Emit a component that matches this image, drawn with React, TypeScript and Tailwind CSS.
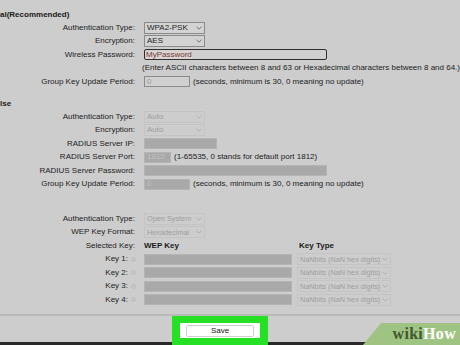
const Chevron = ({ color = "#555" }: { color?: string }) => (
  <svg width="6" height="4" viewBox="0 0 6 4" className="shrink-0">
    <path d="M0.5 0.8 L3 3.2 L5.5 0.8" fill="none" stroke={color} strokeWidth="0.8" />
  </svg>
);

const Select = ({ value, width, disabled, small }: { value: string; width: string; disabled?: boolean; small?: boolean }) => (
  <div
    className={[
      "flex h-[12px] items-center justify-between gap-[1px] whitespace-nowrap border pl-[2px] pr-[2px]",
      width,
      small ? "text-[7.3px]" : "",
      disabled ? "border-[#c4c4c4] text-[#9e9e9e]" : "border-[#8a8a8a] bg-[#d3d3d3] text-[#1e1e1e]",
    ].join(" ")}
  >
    <span className="leading-none">{value}</span>
    <Chevron color={disabled ? "#aaa" : "#555"} />
  </div>
);

const Field = ({ width, value, disabled }: { width: string; value?: string; disabled?: boolean }) => (
  <div
    className={[
      "flex h-[11px] items-center border px-[2px] leading-none",
      width,
      disabled ? "border-[#b4b4b4] bg-[#a9a9a9] text-[#c2c2c2]" : "border-[#8a8a8a] bg-[#d0d0d0] text-[#9a9a9a]",
    ].join(" ")}
  >
    {value}
  </div>
);

const Row = ({ label, children, radio }: { label: string; children?: React.ReactNode; radio?: boolean }) => (
  <div className="flex h-[13.5px] items-center">
    <div className="flex w-[136px] items-center justify-end pr-[1px] text-[#222]">
      <span>{label}</span>
      {radio && <span className="ml-[3px] mr-[-1px] h-[5px] w-[5px] rounded-full border border-[#bdbdbd] bg-[#c8c8c8]" />}
    </div>
    <div className="ml-[8px] flex items-center gap-[3px]">{children}</div>
  </div>
);

const Note = ({ children }: { children: React.ReactNode }) => (
  <span className="whitespace-nowrap text-[#222]">{children}</span>
);

export default function App() {
  return (
    <div className="relative h-[345px] w-[460px] overflow-hidden bg-[#cdcdcd] font-['Liberation_Sans',Arial,sans-serif] text-[8px]">
      <div className="flex flex-col pt-[9px]">
        <div className="flex h-[12px] items-center font-bold text-[#1a1a1a]">al(Recommended)</div>
        <Row label="Authentication Type:">
          <Select value="WPA2-PSK" width="w-[61px]" />
        </Row>
        <Row label="Encryption:">
          <Select value="AES" width="w-[61px]" />
        </Row>
        <Row label="Wireless Password:">
          <div className="flex h-[11px] w-[183px] items-center rounded-[2px] border border-[#2e2e2e] bg-[#d0d0d0] px-[1px] leading-none">
            <span className="bg-[#ddd3d3] text-[#6e3a3a]">MyPassword</span>
          </div>
        </Row>
        <Row label="">
          <span className="pl-[4px]">
            <Note>(Enter ASCII characters between 8 and 63 or Hexadecimal characters between 8 and 64.)</Note>
          </span>
        </Row>
        <Row label="Group Key Update Period:">
          <Field width="w-[46px]" value="0" />
          <Note>(seconds, minimum is 30, 0 meaning no update)</Note>
        </Row>

        <div className="mt-[9.5px] flex h-[12px] items-center font-bold text-[#1a1a1a]">lse</div>
        <Row label="Authentication Type:">
          <Select value="Auto" width="w-[61px]" disabled />
        </Row>
        <Row label="Encryption:">
          <Select value="Auto" width="w-[61px]" disabled />
        </Row>
        <Row label="RADIUS Server IP:">
          <Field width="w-[73px]" disabled />
        </Row>
        <Row label="RADIUS Server Port:">
          <Field width="w-[27px]" value="1812" disabled />
          <Note>(1-65535, 0 stands for default port 1812)</Note>
        </Row>
        <Row label="RADIUS Server Password:">
          <Field width="w-[183px]" disabled />
        </Row>
        <Row label="Group Key Update Period:">
          <Field width="w-[46px]" value="0" disabled />
          <Note>(seconds, minimum is 30, 0 meaning no update)</Note>
        </Row>

        <div className="mt-[21px]" />
        <Row label="Authentication Type:">
          <Select value="Open System" width="w-[61px]" disabled small />
        </Row>
        <Row label="WEP Key Format:">
          <Select value="Hexadecimal" width="w-[61px]" disabled small />
        </Row>
        <Row label="Selected Key:">
          <span className="w-[150px] font-bold text-[#1a1a1a]">WEP Key</span>
          <span className="ml-[2px] font-bold text-[#1a1a1a]">Key Type</span>
        </Row>
        {["Key 1:", "Key 2:", "Key 3:", "Key 4:"].map((k) => (
          <Row key={k} label={k} radio>
            <Field width="w-[148px]" disabled />
            <div className="ml-[2px]">
              <Select value="NaNbits (NaN hex digits)" width="w-[94px]" disabled small />
            </div>
          </Row>
        ))}
      </div>

      <div className="absolute inset-x-0 top-[314px] h-[2px] bg-[#b9b9b9]" />
      <div className="absolute inset-x-0 bottom-0 h-[3px] bg-[#2a2a2a]" />

      <div className="absolute left-[172px] top-[316px] flex h-[29px] w-[96px] items-start bg-[#25e025] px-[8px] pt-[7px]">
        <div className="flex h-[15px] w-full items-center bg-white px-[6px]">
          <div className="flex h-[12px] w-full items-center justify-center rounded-[2px] border border-[#cfcfcf] text-[8px] text-[#111]">
            Save
          </div>
        </div>
      </div>

      <div className="absolute bottom-0 right-0 flex h-[22px] w-[97px] items-center justify-end pr-[4px] [clip-path:polygon(18px_0,100%_0,100%_100%,0_100%)] bg-[#9fc383]">
        <span className="font-['Liberation_Serif',serif] text-[16px] font-bold leading-none tracking-[0.3px]">
          <span className="text-[#3f5a2d]">wiki</span>
          <span className="text-white">How</span>
        </span>
      </div>
    </div>
  );
}
